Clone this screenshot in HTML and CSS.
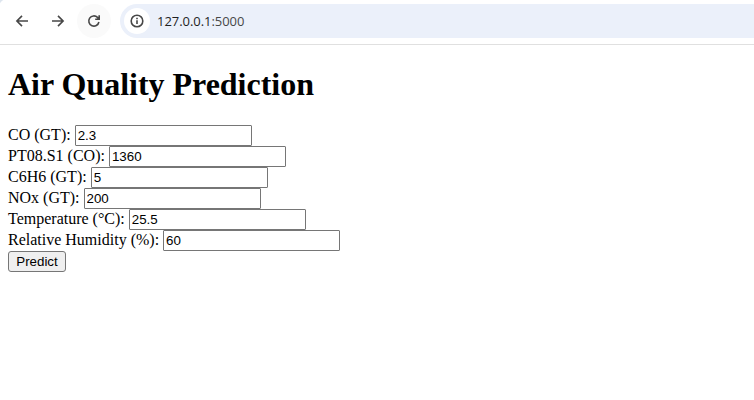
FILE: index.html
```html
<!DOCTYPE html>
<html lang="en">
<head>
<meta charset="utf-8">
<title>Air Quality Prediction</title>
<link rel="stylesheet" href="styles.css">
</head>
<body>
<header class="toolbar">
  <span class="nav"><svg width="16" height="16" viewBox="0 0 16 16"><path d="M14 8H3.200M8 2.900 2.900 8 8 13.100"/></svg></span>
  <span class="nav"><svg width="16" height="16" viewBox="0 0 16 16"><path d="M2 8h10.800M8 2.900 13.100 8 8 13.100"/></svg></span>
  <span class="nav reload"><svg width="16" height="16" viewBox="0 0 16 16"><path d="M12.900 9A5.100 5.100 0 1 1 11.500 4.400L13 6M13.200 2.200v4H9.200"/></svg></span>
  <div class="address">
    <span class="info"><svg width="16" height="16" viewBox="0 0 16 16"><circle cx="8" cy="8" r="5.800"/><path d="M8 7.300v3.700M8 4.800v1.400"/></svg></span>
    <span class="url">127.0.0.1<span class="port">:5000</span></span>
  </div>
</header>
<main class="page">
  <h1>Air Quality Prediction</h1>
  <form>
    <div class="row"><label for="co">CO (GT):</label> <input id="co" value="2.3"></div>
    <div class="row"><label for="pt">PT08.S1 (CO):</label> <input id="pt" value="1360"></div>
    <div class="row"><label for="c6">C6H6 (GT):</label> <input id="c6" value="5"></div>
    <div class="row"><label for="nox">NOx (GT):</label> <input id="nox" value="200"></div>
    <div class="row"><label for="temp">Temperature (°C):</label> <input id="temp" value="25.5"></div>
    <div class="row"><label for="rh">Relative Humidity (%):</label> <input id="rh" value="60"></div>
    <button type="button">Predict</button>
  </form>
</main>
</body>
</html>
```
FILE: styles.css
```css
* { box-sizing: border-box; }
body { margin: 0; background: #fff; color: #000; font: 16px "Liberation Serif", serif; }
.toolbar { display: flex; align-items: center; height: 45px; padding: 0 0 3px 4px; border-bottom: 1px solid #e0e0e0; background: radial-gradient(circle at 6px 6px, #fff 6px, #dde5ee 7px) 0 0 / 5px 5px no-repeat; }
.nav { display: flex; align-items: center; justify-content: center; width: 36px; height: 34px; flex: none; }
.reload { width: 34px; margin: 0 1px; border-radius: 50%; background: #fafafa; }
svg { fill: none; stroke: #474747; stroke-width: 1.6; }
.address { display: flex; align-items: center; flex: 1; height: 34px; margin-left: 8px; padding-left: 4px; border-radius: 17px 0 0 17px; background: #ebf0fa; }
.info { display: flex; align-items: center; justify-content: center; width: 26px; height: 26px; border-radius: 50%; background: #fff; }
.url { margin-left: 7px; color: #1f1f1f; font: 13px "Open Sans", sans-serif; letter-spacing: -0.05px; }
.port { color: #474747; }
.page { padding: 21px 8px 0; }
h1 { margin: 0 0 23px; font-size: 32px; line-height: 36px; font-weight: bold; letter-spacing: -0.02px; }
.row { height: 21px; line-height: 19px; white-space: nowrap; }
input { width: 177px; height: 21px; margin: 0; padding: 1px 2px; border: 1px solid #767676; border-radius: 1px; font: 13.333px "Liberation Sans", sans-serif; vertical-align: top; }
button { display: block; width: 58px; height: 21px; padding: 0; border: 1px solid #767676; border-radius: 3px; background: #efefef; font: 13.333px "Liberation Sans", sans-serif; }
```
